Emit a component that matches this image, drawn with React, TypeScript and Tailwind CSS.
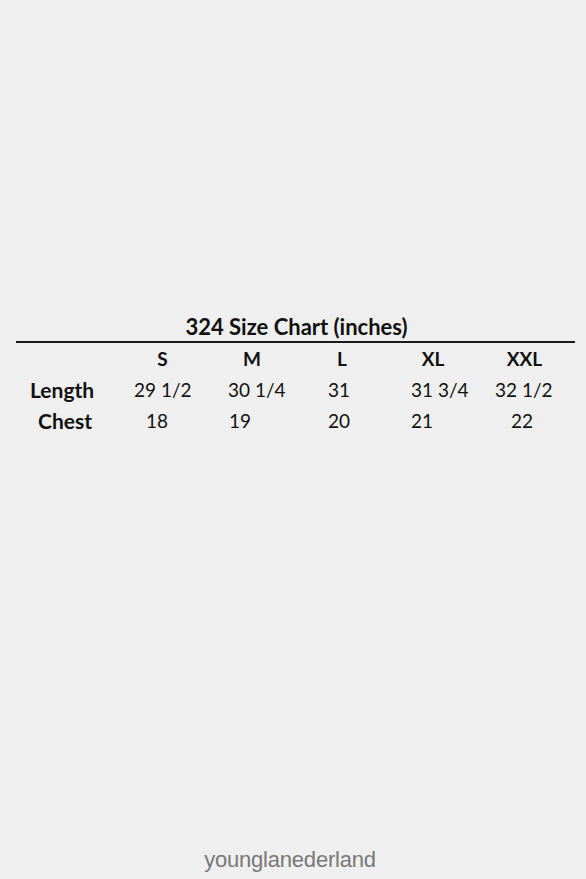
import React from "react";

const SIZES = ["S", "M", "L", "XL", "XXL"];

// per-cell left padding mimics the spreadsheet's loose alignment
const ROWS = [
  {
    label: "Length",
    labelPad: "pl-[14px]",
    cells: [
      { v: "29 1/2", pad: "pl-[16px]" },
      { v: "30 1/4", pad: "pl-[21px]" },
      { v: "31", pad: "pl-[31px]" },
      { v: "31 3/4", pad: "pl-[24px]" },
      { v: "32 1/2", pad: "pl-[16px]" },
    ],
  },
  {
    label: "Chest",
    labelPad: "pl-[22px]",
    cells: [
      { v: "18", pad: "pl-[28px]" },
      { v: "19", pad: "pl-[22px]" },
      { v: "20", pad: "pl-[31px]" },
      { v: "21", pad: "pl-[24px]" },
      { v: "22", pad: "pl-[32px]" },
    ],
  },
];

const COLS = "grid grid-cols-[102px_89px_90px_90px_92px_91px]";

export default function App() {
  return (
    <div className="flex h-[879px] w-full flex-col bg-[#efefef] font-['Lato',sans-serif] text-[#111]">
      <div className="pt-[314px] pl-[16px] pr-[11px]">
        <h1 className="pl-[2px] text-center text-[22px] font-bold leading-[26px] whitespace-nowrap">
          324 Size Chart (inches)
        </h1>
        <div className="mt-[1px] h-[2px] bg-[#1a1a1a]" />
        <div className={`${COLS} mt-[2px] h-[29px] items-center text-[19px] font-bold`}>
          <div />
          {SIZES.map((s) => (
            <div key={s} className="text-center">
              {s}
            </div>
          ))}
        </div>
        {ROWS.map((row) => (
          <div key={row.label} className={`${COLS} h-[31px] items-center text-[19px]`}>
            <div className={`${row.labelPad} text-[21px] font-bold`}>{row.label}</div>
            {row.cells.map((c, i) => (
              <div key={i} className={`${c.pad} whitespace-nowrap`}>
                {c.v}
              </div>
            ))}
          </div>
        ))}
      </div>
      <div className="mt-auto pr-[6px] pb-[3px] text-center font-['Liberation_Sans',Arial,sans-serif] text-[22px] tracking-[-0.2px] text-[#787878]">
        younglanederland
      </div>
    </div>
  );
}
